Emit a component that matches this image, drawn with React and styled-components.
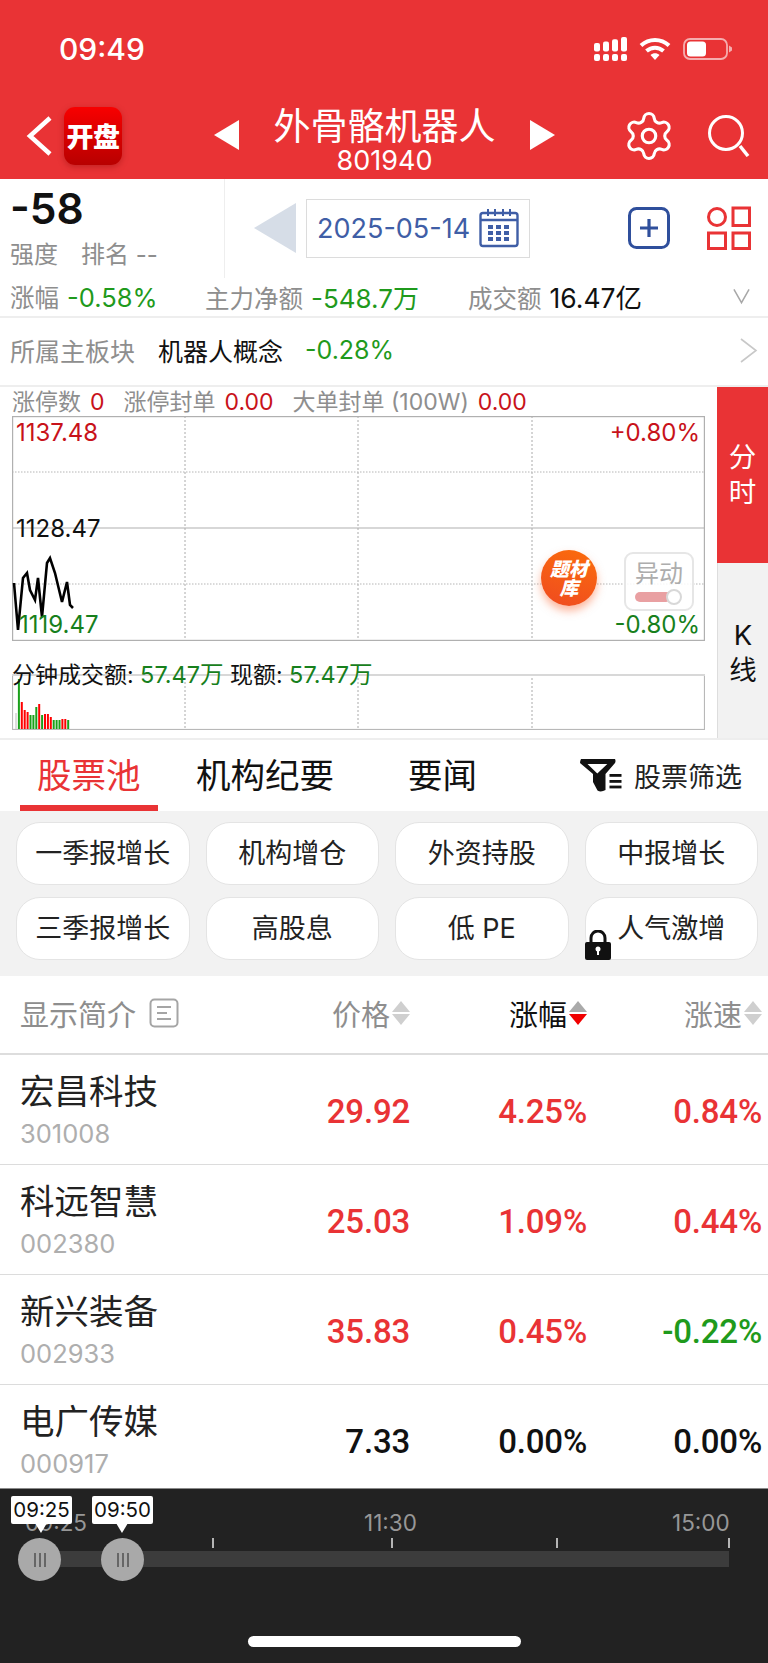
import React from "react";
import styled, { createGlobalStyle } from "styled-components";
import { Settings } from "lucide-react";

const RED = "#e93335";
const GREEN = "#1f9a1c";
const DARK_GREEN = "#17801c";
const SANS = 'Inter, "Noto Sans CJK SC", sans-serif';

const Global = createGlobalStyle`
  html, body { margin: 0; padding: 0; background: #fff; }
  body { font-family: ${SANS}; }
  * { box-sizing: border-box; }
`;

const Page = styled.div`
  width: 768px;
  height: 1663px;
  overflow: hidden;
  display: flex;
  flex-direction: column;
  background: #fff;
`;

/* ---------- red header ---------- */
const Header = styled.header`
  background: ${RED};
  height: 179px;
  color: #fff;
  flex: none;
`;
const StatusBar = styled.div`
  height: 100px;
  display: flex;
  align-items: center;
  padding: 0 36px 2px 59px;
`;
const Clock = styled.div`
  font-weight: 500;
  font-size: 30px;
  flex: 1;
`;
const StatusIcons = styled.div`
  display: flex;
  align-items: center;
  gap: 12px;
`;
const Nav = styled.nav`
  height: 79px;
  display: grid;
  grid-template-columns: 214px 25px 1fr 25px 213px;
  align-items: center;
`;
const NavLeft = styled.div`
  display: flex;
  align-items: center;
  padding: 0 0 8px 26px;
  gap: 12px;
`;
const Badge = styled.div`
  width: 58px;
  height: 58px;
  border-radius: 11px;
  background: linear-gradient(180deg, #f80000, #b80000);
  box-shadow: 0 2px 6px rgba(120, 0, 0, 0.35);
  display: flex;
  align-items: center;
  justify-content: center;
  font-family: "Noto Sans CJK SC", sans-serif;
  font-weight: 900;
  font-size: 27px;
  letter-spacing: -0.5px;
  white-space: nowrap;
`;
const NavArrow = styled.div`
  display: flex;
  margin-bottom: 9px;
`;
const TitleBlock = styled.div`
  align-self: start;
  display: flex;
  flex-direction: column;
  align-items: center;
`;
const Title = styled.div`
  font-family: "Noto Sans CJK SC", sans-serif;
  font-size: 37px;
  line-height: 42px;
  margin-top: 3px;
  white-space: nowrap;
`;
const Code = styled.div`
  font-size: 27px;
  line-height: 30px;
  margin-top: 1px;
`;
const NavRight = styled.div`
  display: flex;
  align-items: center;
  padding: 0 0 8px 67px;
  gap: 32px;
`;

/* ---------- summary ---------- */
const Summary = styled.section`
  height: 99px;
  display: flex;
  flex: none;
`;
const Strength = styled.div`
  width: 225px;
  border-right: 1px solid #eee;
  padding-left: 10px;
`;
const StrengthValue = styled.div`
  font-size: 42.5px;
  font-weight: 600;
  line-height: 50px;
  margin-top: 5px;
  color: #111;
`;
const Muted = styled.span`
  color: #8e8e8e;
`;
const StrengthMeta = styled.div`
  font-size: 24px;
  line-height: 30px;
  margin-top: 6px;
  color: #8e8e8e;
  display: flex;
  gap: 23px;
`;
const DateArea = styled.div`
  flex: 1;
  display: flex;
  align-items: center;
  padding: 0 17px 0 29px;
  margin-top: -1px;
`;
const PrevDay = styled.div`
  width: 0;
  height: 0;
  border-top: 25px solid transparent;
  border-bottom: 25px solid transparent;
  border-right: 42px solid #d6dde7;
`;
const DateBox = styled.div`
  margin-left: 10px;
  width: 224px;
  height: 59px;
  border: 1px solid #dcdcdc;
  display: flex;
  align-items: center;
  padding-left: 10px;
  gap: 9px;
  color: #3f5ea6;
  font-size: 27px;
  white-space: nowrap;
`;
const DateTools = styled.div`
  margin-left: auto;
  display: flex;
  gap: 37px;
  align-items: center;
`;

const Stats = styled.div`
  height: 40px;
  flex: none;
  border-bottom: 2px solid #eee;
  display: flex;
  align-items: center;
  padding: 0 18px 2px 10px;
  font-size: 24.5px;
  white-space: nowrap;
`;
const StatItem = styled.span`
  width: ${(p) => p.$w}px;
  flex: none;
  color: #8e8e8e;
`;
const Num = styled.span`
  color: ${(p) => p.$c || "#111"};
  margin-left: ${(p) => p.$ml ?? 8}px;
  font-size: ${(p) => p.$size || 25}px;
`;
const Board = styled.div`
  height: 69px;
  flex: none;
  border-bottom: 2px solid #eee;
  display: flex;
  align-items: center;
  padding: 0 10px 3px 10px;
  font-size: 25px;
  white-space: nowrap;
`;
const Spacer = styled.span`
  flex: 1;
`;

/* ---------- chart ---------- */
const ChartSection = styled.section`
  height: 353px;
  flex: none;
  display: flex;
  border-bottom: 2px solid #eee;
`;
const ChartMain = styled.div`
  width: 717px;
  padding-left: 12px;
`;
const LimitLine = styled.div`
  height: 29px;
  font-size: 23px;
  line-height: 31px;
  white-space: nowrap;
  color: #8e8e8e;
`;
const LimitItem = styled.span`
  margin-right: 19px;
`;
const LimitVal = styled.span`
  color: #c8121a;
  margin-left: 9px;
`;
const PriceChart = styled.div`
  position: relative;
  width: 693px;
  height: 225px;
`;
const FullSvg = styled.svg`
  display: block;
  width: 100%;
  height: 100%;
`;
const ChartLabel = styled.div`
  position: absolute;
  font-size: 24px;
  line-height: 26px;
  color: ${(p) => p.$c};
  ${(p) => (p.$right ? "right: 5px;" : `left: ${p.$left ?? 4}px;`)}
  top: ${(p) => p.$top}px;
`;
const Topics = styled.div`
  position: absolute;
  left: 529px;
  top: 134px;
  width: 56px;
  height: 56px;
  border-radius: 50%;
  background: linear-gradient(200deg, #fb6d0c, #ef4a20);
  box-shadow: 0 5px 8px rgba(250, 110, 60, 0.5);
  color: #fff;
  font-family: "Noto Sans CJK SC", sans-serif;
  font-weight: 900;
  font-style: italic;
  font-size: 19px;
  line-height: 19px;
  text-align: center;
  display: flex;
  align-items: center;
  justify-content: center;
  padding-bottom: 2px;
  white-space: nowrap;
`;
const Unusual = styled.div`
  position: absolute;
  left: 612px;
  top: 136px;
  width: 70px;
  height: 59px;
  border: 2px solid #e6e6e6;
  border-radius: 9px;
  background: rgba(255, 255, 255, 0.85);
  color: #adadad;
  font-size: 24px;
  line-height: 28px;
  text-align: center;
  padding-top: 6px;
`;
const Toggle = styled.div`
  position: absolute;
  left: 9px;
  top: 38px;
  width: 36px;
  height: 10px;
  border-radius: 5px;
  background: #e9a0a2;
`;
const ToggleKnob = styled.div`
  position: absolute;
  left: 31px;
  top: -3px;
  width: 16px;
  height: 16px;
  border-radius: 50%;
  background: #fff;
  border: 2px solid #d8d8d8;
`;
const VolumeChart = styled.div`
  position: relative;
  width: 693px;
  height: 56px;
  margin-top: 33px;
`;
const VolumeLabel = styled.div`
  position: absolute;
  left: 0;
  top: -13px;
  font-size: 23px;
  line-height: 28px;
  color: #111;
  white-space: nowrap;
`;
const VolumeNum = styled.span`
  color: ${DARK_GREEN};
  font-size: 23.5px;
`;
const Side = styled.div`
  width: 51px;
  display: flex;
  flex-direction: column;
`;
const SideTab = styled.div`
  height: ${(p) => p.$h}px;
  background: ${(p) => (p.$on ? RED : "#f2f2f2")};
  color: ${(p) => (p.$on ? "#fff" : "#111")};
  border-left: ${(p) => (p.$on ? "none" : "1px solid #ddd")};
  display: flex;
  align-items: center;
  justify-content: center;
  text-align: center;
  font-size: 27.5px;
  line-height: 35px;
  padding-top: ${(p) => p.$pt}px;
`;

/* ---------- tabs and presets ---------- */
const Tabs = styled.div`
  height: 71px;
  flex: none;
  display: flex;
  align-items: center;
  font-family: "Noto Sans CJK SC", sans-serif;
  position: relative;
`;
const Tab = styled.div`
  font-size: 34.5px;
  color: ${(p) => (p.$on ? RED : "#111")};
  position: absolute;
  top: 8px;
  line-height: 50px;
  left: ${(p) => p.$x}px;
  white-space: nowrap;
`;
const TabUnderline = styled.div`
  position: absolute;
  left: 20px;
  bottom: 0;
  width: 138px;
  height: 6px;
  background: ${RED};
`;
const FilterButton = styled.div`
  margin-left: auto;
  margin-right: 26px;
  display: flex;
  align-items: center;
  gap: 12px;
  font-size: 27px;
  color: #222;
`;
const Presets = styled.div`
  height: 165px;
  flex: none;
  background: #f2f2f2;
  padding: 11px 10px 0 16px;
  display: grid;
  grid-template-columns: repeat(4, 173.5px);
  column-gap: 16px;
  row-gap: 12px;
  grid-auto-rows: 63px;
`;
const Preset = styled.div`
  position: relative;
  background: #fff;
  border: 1px solid #e4e4e4;
  border-radius: 24px;
  display: flex;
  align-items: center;
  justify-content: center;
  font-size: 27px;
  color: #222;
  padding-bottom: 4px;
  white-space: nowrap;
`;
const LockMark = styled.svg`
  position: absolute;
  left: -1px;
  bottom: -1px;
`;

/* ---------- stock table ---------- */
const columns = `
  display: grid;
  grid-template-columns: 270px 120px 177px 175px;
  padding: 0 6px 0 20px;
  align-items: center;
`;
const TableHead = styled.div`
  ${columns}
  height: 79px;
  flex: none;
  border-bottom: 2px solid #ddd;
  font-size: 29px;
  color: #8e8e8e;
  padding-bottom: 4px;
`;
const HeadIntro = styled.div`
  display: flex;
  align-items: center;
  gap: 13px;
`;
const HeadCell = styled.div`
  display: flex;
  justify-content: flex-end;
  align-items: center;
  gap: 2px;
  color: ${(p) => (p.$on ? "#111" : "#8e8e8e")};
`;
const SortArrows = styled.span`
  display: flex;
  flex-direction: column;
  gap: 2px;
`;
const Arrow = styled.span`
  width: 0;
  height: 0;
  border-left: 9.5px solid transparent;
  border-right: 9.5px solid transparent;
  ${(p) => (p.$down ? "border-top" : "border-bottom")}: 11px solid ${(p) => p.$c};
`;
const Rows = styled.div`
  height: 433px;
  flex: none;
  overflow: hidden;
`;
const Row = styled.div`
  ${columns}
  height: 110px;
  border-bottom: 1px solid #dcdcdc;
`;
const NameCell = styled.div`
  display: flex;
  flex-direction: column;
  margin-top: -3px;
`;
const StockName = styled.div`
  font-family: "Noto Sans CJK SC", sans-serif;
  font-size: 34.5px;
  line-height: 46px;
  color: #222;
`;
const StockCode = styled.div`
  font-size: 25.5px;
  line-height: 32px;
  color: #aeaeae;
  margin-top: 6px;
`;
const Value = styled.div`
  text-align: right;
  font-family: Roboto, sans-serif;
  font-weight: 500;
  font-size: 33px;
  letter-spacing: -0.2px;
  padding-top: 4px;
  color: ${(p) => p.$c};
`;

/* ---------- time range slider ---------- */
const RangeBar = styled.div`
  flex: 1;
  background: #222;
  border-top: 1px solid #8a8a8a;
  position: relative;
`;
const TimeLabel = styled.div`
  position: absolute;
  top: 20px;
  left: ${(p) => p.$x}px;
  font-size: 22.5px;
  line-height: 28px;
  color: #979797;
`;
const Tick = styled.div`
  position: absolute;
  top: 49px;
  left: ${(p) => p.$x}px;
  width: 2px;
  height: 10px;
  background: #b5b5b5;
`;
const Track = styled.div`
  position: absolute;
  left: 40px;
  top: 62px;
  width: 689px;
  height: 16px;
  background: #3c3c3c;
`;
const Handle = styled.div`
  position: absolute;
  left: ${(p) => p.$x}px;
  top: 49px;
  width: 43px;
  height: 43px;
  border-radius: 50%;
  background: #a9a9a9;
  display: flex;
  align-items: center;
  justify-content: center;
  gap: 3px;
`;
const Grip = styled.span`
  width: 2px;
  height: 14px;
  background: #666;
`;
const Bubble = styled.div`
  position: absolute;
  left: ${(p) => p.$x}px;
  top: 7px;
  width: 61px;
  height: 28px;
  background: #fff;
  border-radius: 2px;
  color: #111;
  font-size: 20.5px;
  line-height: 28px;
  text-align: center;
  &::after {
    content: "";
    position: absolute;
    left: 24px;
    top: 27px;
    border-left: 6px solid transparent;
    border-right: 6px solid transparent;
    border-top: 10px solid #fff;
  }
`;
const HomeBar = styled.div`
  position: absolute;
  left: 248px;
  top: 147px;
  width: 273px;
  height: 11px;
  border-radius: 6px;
  background: #fff;
`;

/* ---------- drawings ---------- */
const SignalIcon = () => (
  <svg width="33" height="24" viewBox="0 0 33 24" fill="#fff">
    <rect x="0" y="6" width="6" height="8.5" rx="2" />
    <rect x="9" y="4.5" width="6" height="10" rx="2" />
    <rect x="18" y="2.3" width="6" height="12.2" rx="2" />
    <rect x="27" y="0" width="6" height="14.5" rx="2" />
    <rect x="0" y="17" width="6" height="7" rx="2" />
    <rect x="9" y="17" width="6" height="7" rx="2" />
    <rect x="18" y="17" width="6" height="7" rx="2" />
    <rect x="27" y="17" width="6" height="7" rx="2" />
  </svg>
);
const WifiIcon = () => (
  <svg width="32" height="24" viewBox="0 0 32 24" fill="none" stroke="#fff" strokeWidth="4">
    <path d="M2 8.5 C10 1, 22 1, 30 8.5" />
    <path d="M7.5 14 C12.5 9.5, 19.5 9.5, 24.5 14" />
    <path d="M16 23 L11.5 18 C14 15.8, 18 15.8, 20.5 18 Z" fill="#fff" stroke="none" />
  </svg>
);
const BatteryIcon = () => (
  <svg width="49" height="22" viewBox="0 0 49 22">
    <rect x="1" y="1" width="43" height="20" rx="6" fill="none" stroke="#f5adae" strokeWidth="1.8" />
    <rect x="4" y="3.5" width="19" height="15" rx="3.5" fill="#fff" />
    <path d="M46 7.5 L49 9.5 V12.5 L46 14.5 Z" fill="#f5adae" />
  </svg>
);
const BackIcon = () => (
  <svg width="26" height="40" viewBox="0 0 26 40" fill="none" stroke="#fff" strokeWidth="4.5">
    <path d="M24 2 L4 20 L24 38" />
  </svg>
);
const Triangle = ({ right }) => (
  <svg width="25" height="30" viewBox="0 0 25 30" fill="#fff">
    <path d={right ? "M0 0 L25 15 L0 30 Z" : "M25 0 L0 15 L25 30 Z"} />
  </svg>
);
const SearchIcon = () => (
  <svg width="42" height="42" viewBox="0 0 42 42" fill="none" stroke="#fff">
    <circle cx="18" cy="18" r="16.5" strokeWidth="3" />
    <path d="M32 31 L40 41" strokeWidth="3.5" />
  </svg>
);
const CalendarIcon = () => (
  <svg width="40" height="40" viewBox="0 0 40 40" fill="none" stroke="#3f5ea6">
    <rect x="1.5" y="5" width="37" height="33" rx="2.5" strokeWidth="2.4" />
    <path d="M2 12 H38" strokeWidth="2.4" />
    <path d="M9 1 V8 M16 1 V8 M24 1 V8 M31 1 V8" strokeWidth="2" />
    <g fill="#3f5ea6" stroke="none">
      {[9, 17, 25].map((x) =>
        [17, 23, 29].map((y) => <rect key={`${x}-${y}`} x={x} y={y} width="5" height="4" />)
      )}
    </g>
  </svg>
);
const PlusBox = () => (
  <svg width="42" height="42" viewBox="0 0 42 42" fill="none" stroke="#2f4f9c">
    <rect x="1.5" y="1.5" width="39" height="39" rx="7" strokeWidth="3" />
    <path d="M21 12 V30 M12 21 H30" strokeWidth="3.2" />
  </svg>
);
const GridIcon = () => (
  <svg width="44" height="44" viewBox="0 0 44 44" fill="none" stroke={RED} strokeWidth="3">
    <circle cx="10" cy="11" r="8.5" />
    <rect x="26" y="2" width="16.5" height="17.5" />
    <rect x="1.5" y="27" width="17" height="15.5" />
    <rect x="26" y="27" width="16.5" height="15.5" />
  </svg>
);
const ChevronDown = () => (
  <svg width="18" height="17" viewBox="0 0 18 17" fill="none" stroke="#a8a8a8" strokeWidth="1.6">
    <path d="M1 1 L9 15 L17 1" />
  </svg>
);
const ChevronRight = () => (
  <svg width="18" height="25" viewBox="0 0 18 25" fill="none" stroke="#c8c8c8" strokeWidth="1.6">
    <path d="M1 1 L16 12.5 L1 24" />
  </svg>
);
const FilterIcon = () => (
  <svg width="42" height="33" viewBox="0 0 42 33" fill="#111">
    <path
      fillRule="evenodd"
      d="M1 0 H35 Q36 2 35 4 L25.5 15 V31 Q21 33.5 17.5 31.5 L13 23 V15 L0 4 Q0 2 1 0 Z M7.5 5 L17.3 14.5 L27.3 5 Z"
    />
    <rect x="29.5" y="15" width="12" height="2.8" />
    <rect x="29.5" y="21" width="12" height="2.8" />
    <rect x="29.5" y="26.6" width="12" height="2.8" />
  </svg>
);
const IntroIcon = () => (
  <svg width="30" height="30" viewBox="0 0 30 30" fill="none" stroke="#a5a5a5" strokeWidth="2">
    <rect x="1.5" y="1.5" width="27" height="27" rx="4" />
    <path d="M8 9 H22 M8 15 H18 M8 21 H22" />
  </svg>
);

const GRID_X = [173, 346, 520];

const PriceGrid = () => {
  const points = [
    [14, 583], [18, 630], [23, 578], [27, 573], [30, 590], [35, 600], [38, 578], [42, 617],
    [47, 563], [50, 558], [55, 573], [62, 602], [67, 582], [70, 605], [73, 608],
  ].map(([x, y]) => `${x - 12},${y - 416}`).join(" ");
  return (
    <FullSvg viewBox="0 0 693 225">
      {GRID_X.map((x) => (
        <line key={x} x1={x} x2={x} y1="0" y2="225" stroke="#aaa" strokeDasharray="2 2" />
      ))}
      <line x1="0" x2="693" y1="56" y2="56" stroke="#b5b5b5" strokeDasharray="1.5 1.5" />
      <line x1="0" x2="693" y1="168" y2="168" stroke="#b5b5b5" strokeDasharray="1.5 1.5" />
      <line x1="0" x2="693" y1="112" y2="112" stroke="#b0b0b0" strokeWidth="1.2" />
      <rect x="0.5" y="0.5" width="692" height="224" fill="none" stroke="#b0b0b0" strokeWidth="1.4" />
      <polyline points={points} fill="none" stroke="#000" strokeWidth="2.6" />
    </FullSvg>
  );
};

const VOLUME = [
  ["g", 16], ["g", 50], ["r", 27], ["r", 19], ["r", 17], ["g", 14], ["g", 14], ["g", 22], ["r", 25],
  ["g", 14], ["r", 15], ["r", 15], ["r", 12], ["g", 9], ["g", 9], ["g", 9], ["r", 10], ["r", 10], ["g", 9],
];

const VolumeGrid = () => (
  <FullSvg viewBox="0 0 693 56">
    {GRID_X.map((x) => (
      <line key={x} x1={x} x2={x} y1="0" y2="56" stroke="#aaa" strokeDasharray="2 2" />
    ))}
    <rect x="0.5" y="0.5" width="692" height="55" fill="none" stroke="#b8b8b8" strokeWidth="1.2" />
    <line x1="0" x2="693" y1="1" y2="1" stroke="#d8d8d8" strokeWidth="2" />
    {VOLUME.map(([kind, h], i) => (
      <rect
        key={i}
        x={i === 0 ? 3 : 3 + i * 2.9}
        y={55 - h}
        width="2"
        height={h}
        fill={i === 0 ? "#ddd" : kind === "r" ? "#f00" : "#1aa01a"}
      />
    ))}
  </FullSvg>
);

const PRESETS = ["一季报增长", "机构增仓", "外资持股", "中报增长", "三季报增长", "高股息", "低 PE", "人气激增"];
const STOCKS = [
  { name: "宏昌科技", code: "301008", price: "29.92", pct: "4.25%", speed: "0.84%", c: [RED, RED, RED] },
  { name: "科远智慧", code: "002380", price: "25.03", pct: "1.09%", speed: "0.44%", c: [RED, RED, RED] },
  { name: "新兴装备", code: "002933", price: "35.83", pct: "0.45%", speed: "-0.22%", c: [RED, RED, GREEN] },
  { name: "电广传媒", code: "000917", price: "7.33", pct: "0.00%", speed: "0.00%", c: ["#111", "#111", "#111"] },
];

const Sort = ({ active }) => (
  <SortArrows>
    <Arrow $c={active ? "#aaa" : "#cfcfcf"} />
    <Arrow $down $c={active ? "#f00000" : "#cfcfcf"} />
  </SortArrows>
);

export default function App() {
  return (
    <Page>
      <Global />
      <Header>
        <StatusBar>
          <Clock>09:49</Clock>
          <StatusIcons>
            <SignalIcon />
            <WifiIcon />
            <BatteryIcon />
          </StatusIcons>
        </StatusBar>
        <Nav>
          <NavLeft>
            <BackIcon />
            <Badge>开盘</Badge>
          </NavLeft>
          <NavArrow><Triangle /></NavArrow>
          <TitleBlock>
            <Title>外骨骼机器人</Title>
            <Code>801940</Code>
          </TitleBlock>
          <NavArrow><Triangle right /></NavArrow>
          <NavRight>
            <Settings size={54} strokeWidth={1.4} color="#fff" />
            <SearchIcon />
          </NavRight>
        </Nav>
      </Header>

      <Summary>
        <Strength>
          <StrengthValue>-58</StrengthValue>
          <StrengthMeta>
            <span>强度</span>
            <span>排名 --</span>
          </StrengthMeta>
        </Strength>
        <DateArea>
          <PrevDay />
          <DateBox>
            2025-05-14
            <CalendarIcon />
          </DateBox>
          <DateTools>
            <PlusBox />
            <GridIcon />
          </DateTools>
        </DateArea>
      </Summary>

      <Stats>
        <StatItem $w={195}>涨幅<Num $size={25.5} $c={GREEN}>-0.58%</Num></StatItem>
        <StatItem $w={263}>主力净额<Num $size={26} $c={GREEN}>-548.7万</Num></StatItem>
        <StatItem $w={265}>成交额<Num $size={26.5}>16.47亿</Num></StatItem>
        <ChevronDown />
      </Stats>

      <Board>
        <Muted>所属主板块</Muted>
        <Num $ml={23}>机器人概念</Num>
        <Num $ml={22} $c={GREEN}>-0.28%</Num>
        <Spacer />
        <ChevronRight />
      </Board>

      <ChartSection>
        <ChartMain>
          <LimitLine>
            <LimitItem>涨停数<LimitVal>0</LimitVal></LimitItem>
            <LimitItem>涨停封单<LimitVal>0.00</LimitVal></LimitItem>
            <LimitItem>大单封单 (100W)<LimitVal>0.00</LimitVal></LimitItem>
          </LimitLine>
          <PriceChart>
            <PriceGrid />
            <ChartLabel $c="#c8121a" $top={4}>1137.48</ChartLabel>
            <ChartLabel $c="#c8121a" $top={4} $right>+0.80%</ChartLabel>
            <ChartLabel $c="#111" $top={100}>1128.47</ChartLabel>
            <ChartLabel $c={DARK_GREEN} $top={196} $left={7}>1119.47</ChartLabel>
            <ChartLabel $c={DARK_GREEN} $top={196} $right>-0.80%</ChartLabel>
            <Topics>题材<br />库</Topics>
            <Unusual>
              异动
              <Toggle><ToggleKnob /></Toggle>
            </Unusual>
          </PriceChart>
          <VolumeChart>
            <VolumeGrid />
            <VolumeLabel>
              分钟成交额: <VolumeNum>57.47万</VolumeNum> 现额: <VolumeNum>57.47万</VolumeNum>
            </VolumeLabel>
          </VolumeChart>
        </ChartMain>
        <Side>
          <SideTab $on $h={176} $pt={0}>分<br />时</SideTab>
          <SideTab $h={175} $pt={4}>K<br />线</SideTab>
        </Side>
      </ChartSection>

      <Tabs>
        <Tab $on $x={37}>股票池</Tab>
        <Tab $x={196}>机构纪要</Tab>
        <Tab $x={408}>要闻</Tab>
        <TabUnderline />
        <FilterButton>
          <FilterIcon />
          股票筛选
        </FilterButton>
      </Tabs>

      <Presets>
        {PRESETS.map((label, i) => (
          <Preset key={label}>
            {label}
            {i === 7 && (
              <LockMark width="26" height="30" viewBox="0 0 26 30">
                <path d="M6 13 V8 A7 7 0 0 1 20 8 V13" fill="none" stroke="#111" strokeWidth="3" />
                <rect x="0" y="12" width="26" height="18" rx="2" fill="#111" />
                <circle cx="13" cy="19" r="2.5" fill="#fff" />
                <rect x="12" y="19" width="2" height="6" fill="#fff" />
              </LockMark>
            )}
          </Preset>
        ))}
      </Presets>

      <TableHead>
        <HeadIntro>显示简介<IntroIcon /></HeadIntro>
        <HeadCell>价格<Sort /></HeadCell>
        <HeadCell $on>涨幅<Sort active /></HeadCell>
        <HeadCell>涨速<Sort /></HeadCell>
      </TableHead>
      <Rows>
        {STOCKS.map((s) => (
          <Row key={s.code}>
            <NameCell>
              <StockName>{s.name}</StockName>
              <StockCode>{s.code}</StockCode>
            </NameCell>
            <Value $c={s.c[0]}>{s.price}</Value>
            <Value $c={s.c[1]}>{s.pct}</Value>
            <Value $c={s.c[2]}>{s.speed}</Value>
          </Row>
        ))}
      </Rows>

      <RangeBar>
        <TimeLabel $x={25}>09:25</TimeLabel>
        <TimeLabel $x={364}>11:30</TimeLabel>
        <TimeLabel $x={672}>15:00</TimeLabel>
        {[212, 391, 556, 728].map((x) => <Tick key={x} $x={x} />)}
        <Track />
        <Handle $x={18}><Grip /><Grip /><Grip /></Handle>
        <Handle $x={101}><Grip /><Grip /><Grip /></Handle>
        <Bubble $x={11}>09:25</Bubble>
        <Bubble $x={92}>09:50</Bubble>
        <HomeBar />
      </RangeBar>
    </Page>
  );
}
